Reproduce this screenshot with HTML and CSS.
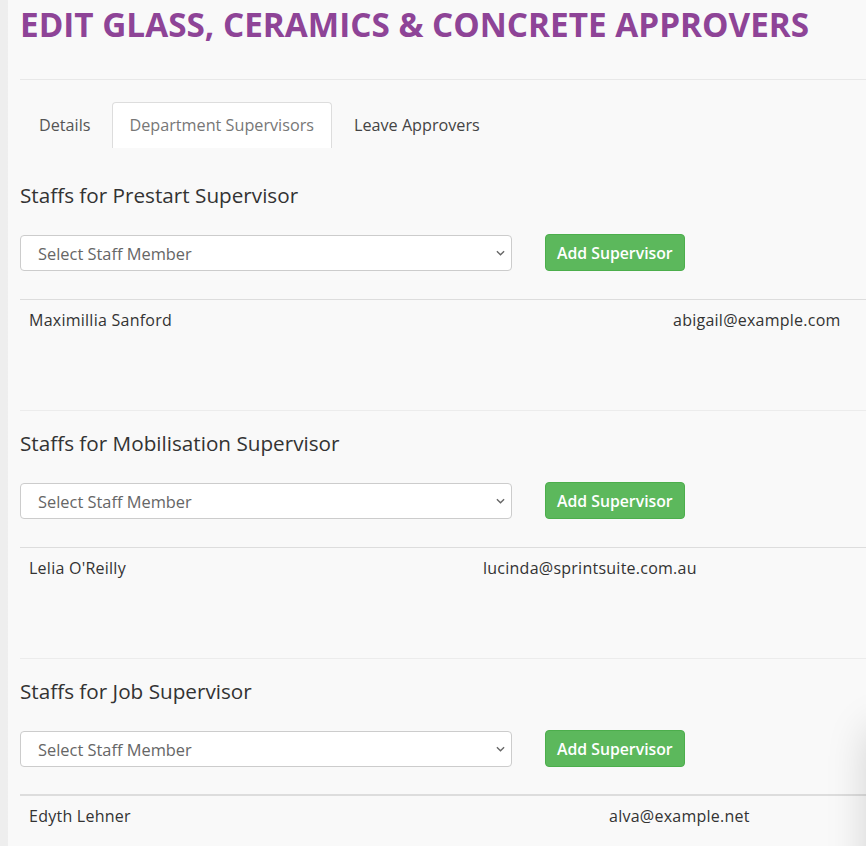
FILE: index.html
```html
<!DOCTYPE html>
<html lang="en">
<head>
<meta charset="utf-8">
<title>Edit Glass, Ceramics &amp; Concrete Approvers</title>
<link rel="stylesheet" href="styles.css">
</head>
<body>
<div class="page">
  <h1 class="title">EDIT GLASS, CERAMICS &amp; CONCRETE APPROVERS</h1>
  <hr class="rule">
  <ul class="tabs">
    <li class="tab">Details</li>
    <li class="tab active">Department Supervisors</li>
    <li class="tab">Leave Approvers</li>
  </ul>

  <section class="group">
    <h2 class="group-title">Staffs for Prestart Supervisor</h2>
    <div class="picker">
      <div class="select-wrap">
        <select class="select"><option>Select Staff Member</option></select>
        <svg class="chev" width="10" height="6" viewBox="0 0 10 6"><path d="M1 1l4 4 4-4" fill="none" stroke="#666" stroke-width="1.5"/></svg>
      </div>
      <button class="btn-add" type="button">Add Supervisor</button>
    </div>
    <div class="table">
      <div class="row"><span class="cell name name-a">Maximillia Sanford</span><span class="cell">abigail@example.com</span></div>
    </div>
  </section>
  <hr class="sep">

  <section class="group">
    <h2 class="group-title">Staffs for Mobilisation Supervisor</h2>
    <div class="picker">
      <div class="select-wrap">
        <select class="select"><option>Select Staff Member</option></select>
        <svg class="chev" width="10" height="6" viewBox="0 0 10 6"><path d="M1 1l4 4 4-4" fill="none" stroke="#666" stroke-width="1.5"/></svg>
      </div>
      <button class="btn-add" type="button">Add Supervisor</button>
    </div>
    <div class="table">
      <div class="row"><span class="cell name name-b">Lelia O'Reilly</span><span class="cell">lucinda@sprintsuite.com.au</span></div>
    </div>
  </section>
  <hr class="sep">

  <section class="group">
    <h2 class="group-title">Staffs for Job Supervisor</h2>
    <div class="picker">
      <div class="select-wrap">
        <select class="select"><option>Select Staff Member</option></select>
        <svg class="chev" width="10" height="6" viewBox="0 0 10 6"><path d="M1 1l4 4 4-4" fill="none" stroke="#666" stroke-width="1.5"/></svg>
      </div>
      <button class="btn-add" type="button">Add Supervisor</button>
    </div>
    <div class="table table-thick">
      <div class="row"><span class="cell name name-c">Edyth Lehner</span><span class="cell">alva@example.net</span></div>
    </div>
  </section>
</div>
<div class="floating-shadow"></div>
</body>
</html>
```

FILE: styles.css
```css
html, body {
  margin: 0;
  padding: 0;
}
body {
  background: linear-gradient(to right, #eeeeee, #f3f3f3);
  font-family: "Open Sans", "Noto Sans", sans-serif;
  color: #333;
  overflow: hidden;
  height: 846px;
}
.page {
  margin-left: 8px;
  padding-left: 12px;
  background: #f9f9f9;
  min-height: 846px;
  box-sizing: border-box;
  overflow: hidden;
}
.title {
  margin: 0;
  padding-top: 4px;
  font-size: 33.3px;
  line-height: 40px;
  font-weight: 700;
  color: #8e4497;
  white-space: nowrap;
}
.rule {
  margin: 35px 0 0;
  border: 0;
  border-top: 1px solid #e8e8e8;
  height: 0;
}
.tabs {
  list-style: none;
  margin: 22px 0 0;
  padding: 0;
  display: flex;
  gap: 3px;
}
.tab {
  height: 46px;
  box-sizing: border-box;
  padding: 0 17px 0 18px;
  line-height: 44px;
  font-size: 16.2px;
  color: #555;
  border: 1px solid transparent;
  border-bottom: 0;
  border-radius: 4px 4px 0 0;
  white-space: nowrap;
}
.tab.active {
  background: #fff;
  border-color: #dddddd;
  color: #777;
  padding: 0 17px;
}
.tab:last-child {
  color: #444;
}
.group-title {
  margin: 35px 0 0;
  font-size: 20.7px;
  line-height: 24px;
  font-weight: 400;
  color: #333;
  white-space: nowrap;
}
.sep + .group .group-title {
  margin-top: 20px;
}
.picker {
  margin-top: 27px;
  display: flex;
  align-items: flex-start;
  gap: 33px;
}
.select-wrap {
  position: relative;
  width: 492px;
  height: 36px;
  margin-top: 1px;
}
.select {
  appearance: none;
  -webkit-appearance: none;
  width: 100%;
  height: 100%;
  box-sizing: border-box;
  border: 1px solid #cccccc;
  border-radius: 4px;
  background: #fff;
  padding: 0 17px;
  font-family: inherit;
  font-size: 16.4px;
  color: #666;
}
.chev {
  position: absolute;
  right: 7px;
  top: 15px;
  width: 9px;
  height: 6px;
}
.btn-add {
  height: 37px;
  padding: 0 11px;
  border: 1px solid #4cae4c;
  border-radius: 4px;
  background: #5cb85c;
  color: #fff;
  font-family: inherit;
  font-size: 15.8px;
  font-weight: 600;
  white-space: nowrap;
}
.table {
  margin-top: 28px;
  border-top: 1px solid #dddddd;
  width: 1000px;
}
.table-thick {
  border-top-width: 2px;
  margin-top: 27px;
}
.row {
  display: flex;
  font-size: 16px;
  letter-spacing: 0.25px;
  line-height: 24px;
  color: #333;
}
.cell {
  padding: 8px 9px;
  white-space: nowrap;
}
.name {
  box-sizing: border-box;
}
.name-a { width: 644px; }
.name-b { width: 454px; }
.name-c { width: 580px; }
.sep {
  margin: 70px 0 0;
  border: 0;
  border-top: 1px solid #ececec;
  height: 0;
}
.floating-shadow {
  position: fixed;
  left: 870px;
  top: 730px;
  width: 300px;
  height: 300px;
  background: #fff;
  box-shadow: 0 0 40px rgba(0, 0, 0, 0.18);
}
```
